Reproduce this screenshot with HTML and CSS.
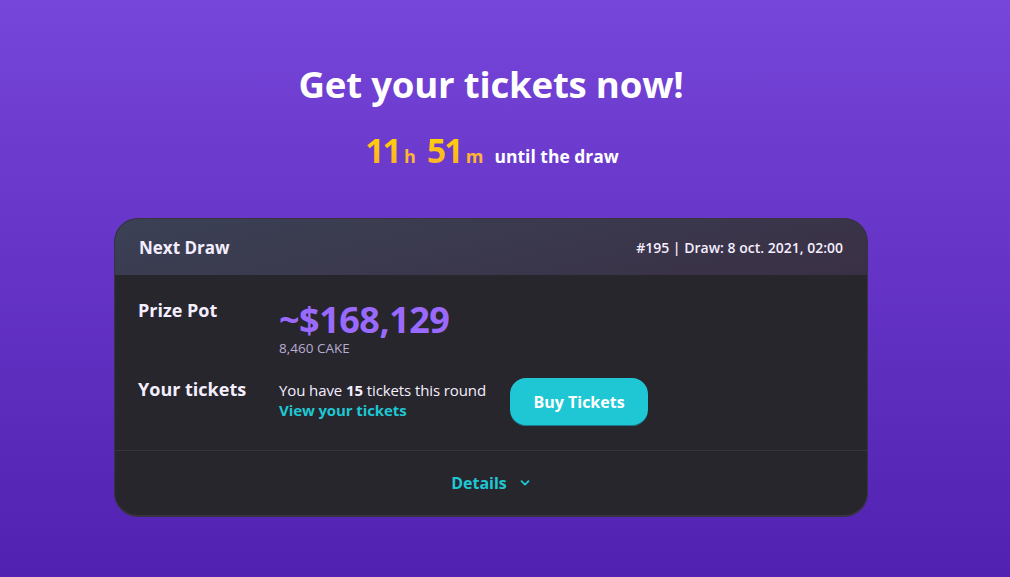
FILE: index.html
```html
<!DOCTYPE html>
<html>
<head>
<meta charset="utf-8">
<link rel="stylesheet" href="styles.css">
</head>
<body>
<div class="page">
  <h1 class="title">Get your tickets now!</h1>
  <div class="countdown">
    <span class="num">11</span><span class="unit">h</span>
    <span class="num">51</span><span class="unit">m</span>
    <span class="until">until the draw</span>
  </div>
  <div class="card">
    <div class="card-header">
      <h2 class="h-title">Next Draw</h2>
      <span class="h-meta">#195 | Draw: 8 oct. 2021, 02:00</span>
    </div>
    <div class="card-body">
      <div class="label">Prize Pot</div>
      <div class="pot">
        <div class="amount">~$168,129</div>
        <div class="cake">8,460 CAKE</div>
      </div>
      <div class="label">Your tickets</div>
      <div class="tickets">
        <div class="ticket-text">
          <div>You have <b>15</b> tickets this round</div>
          <a class="view">View your tickets</a>
        </div>
        <button class="buy">Buy Tickets</button>
      </div>
    </div>
    <div class="card-footer">
      <span class="details">Details</span>
      <svg class="chev" width="12" height="12" viewBox="0 0 12 12"><path d="M2.5 4.2 L6 7.6 L9.5 4.2" fill="none" stroke="#1FC7D4" stroke-width="1.8" stroke-linecap="round" stroke-linejoin="round"/></svg>
    </div>
  </div>
</div>
</body>
</html>
```
FILE: styles.css
```css
html, body {
  margin: 0;
  padding: 0;
  height: 100%;
}
body {
  background: linear-gradient(180deg, #7645D9 0%, #5121B1 100%);
  font-family: "Open Sans", "Liberation Sans", sans-serif;
  color: #F4EEFF;
  overflow: hidden;
}
.page {
  width: 982px;
  display: flex;
  flex-direction: column;
  align-items: center;
  padding-top: 62px;
}
.title {
  margin: 0;
  font-size: 36.6px;
  font-weight: 700;
  line-height: 44px;
  color: #FFFFFF;
  letter-spacing: -0.2px;
}
.countdown {
  margin-top: 24px;
  display: flex;
  align-items: baseline;
  height: 40px;
  padding-left: 2px;
}
.num {
  font-size: 34px;
  font-weight: 700;
  line-height: 40px;
  background: linear-gradient(180deg, #FFD800 0%, #FDAB32 100%);
  -webkit-background-clip: text;
  background-clip: text;
  color: transparent;
  margin-right: 4px;
  letter-spacing: -2px;
}
.unit {
  font-size: 18px;
  font-weight: 700;
  color: #FDB533;
  margin-right: 11px;
}
.until {
  font-size: 17.5px;
  font-weight: 700;
  color: #FFFFFF;
}
.card {
  margin-top: 48px;
  width: 754px;
  box-sizing: border-box;
  border: 1px solid #383241;
  border-bottom-width: 2px;
  border-radius: 24px;
  background: #27262C;
  overflow: hidden;
}
.card-header {
  display: flex;
  justify-content: space-between;
  align-items: center;
  height: 56px;
  padding: 0 24px;
  background: linear-gradient(166.77deg, #3B4155 0%, #3A3045 100%);
}
.h-title {
  margin: 0;
  font-size: 17px;
  font-weight: 700;
  color: #F4EEFF;
}
.h-meta {
  font-size: 14px;
  font-weight: 600;
  color: #F4EEFF;
}
.card-body {
  display: grid;
  grid-template-columns: 141px 1fr;
  row-gap: 22px;
  padding: 24px 23px 24px;
  border-bottom: 1px solid #383241;
}
.label {
  font-size: 18px;
  font-weight: 700;
  line-height: 22px;
  color: #F4EEFF;
}
.amount {
  font-size: 36px;
  font-weight: 700;
  line-height: 41px;
  color: #9A6AFF;
  letter-spacing: -0.5px;
}
.cake {
  font-size: 13.5px;
  line-height: 16px;
  color: #B8ADD2;
}
.tickets {
  display: flex;
  align-items: flex-start;
  gap: 24px;
}
.ticket-text {
  font-size: 15px;
  line-height: 20px;
  color: #F4EEFF;
  margin-top: 2px;
  letter-spacing: -0.1px;
}
.ticket-text b {
  font-weight: 700;
}
.view {
  font-weight: 700;
  color: #1FC7D4;
  display: block;
  line-height: 20px;
}
.buy {
  height: 48px;
  width: 138px;
  border: none;
  border-radius: 16px;
  background: #1FC7D4;
  color: #FFFFFF;
  font-family: inherit;
  font-size: 16px;
  font-weight: 700;
  box-shadow: inset 0 -1px 0 rgba(14,14,44,0.4);
}
.card-footer {
  display: flex;
  justify-content: center;
  align-items: center;
  gap: 12px;
  height: 64px;
}
.details {
  font-size: 16px;
  font-weight: 700;
  color: #1FC7D4;
}
.chev {
  display: block;
}
```
